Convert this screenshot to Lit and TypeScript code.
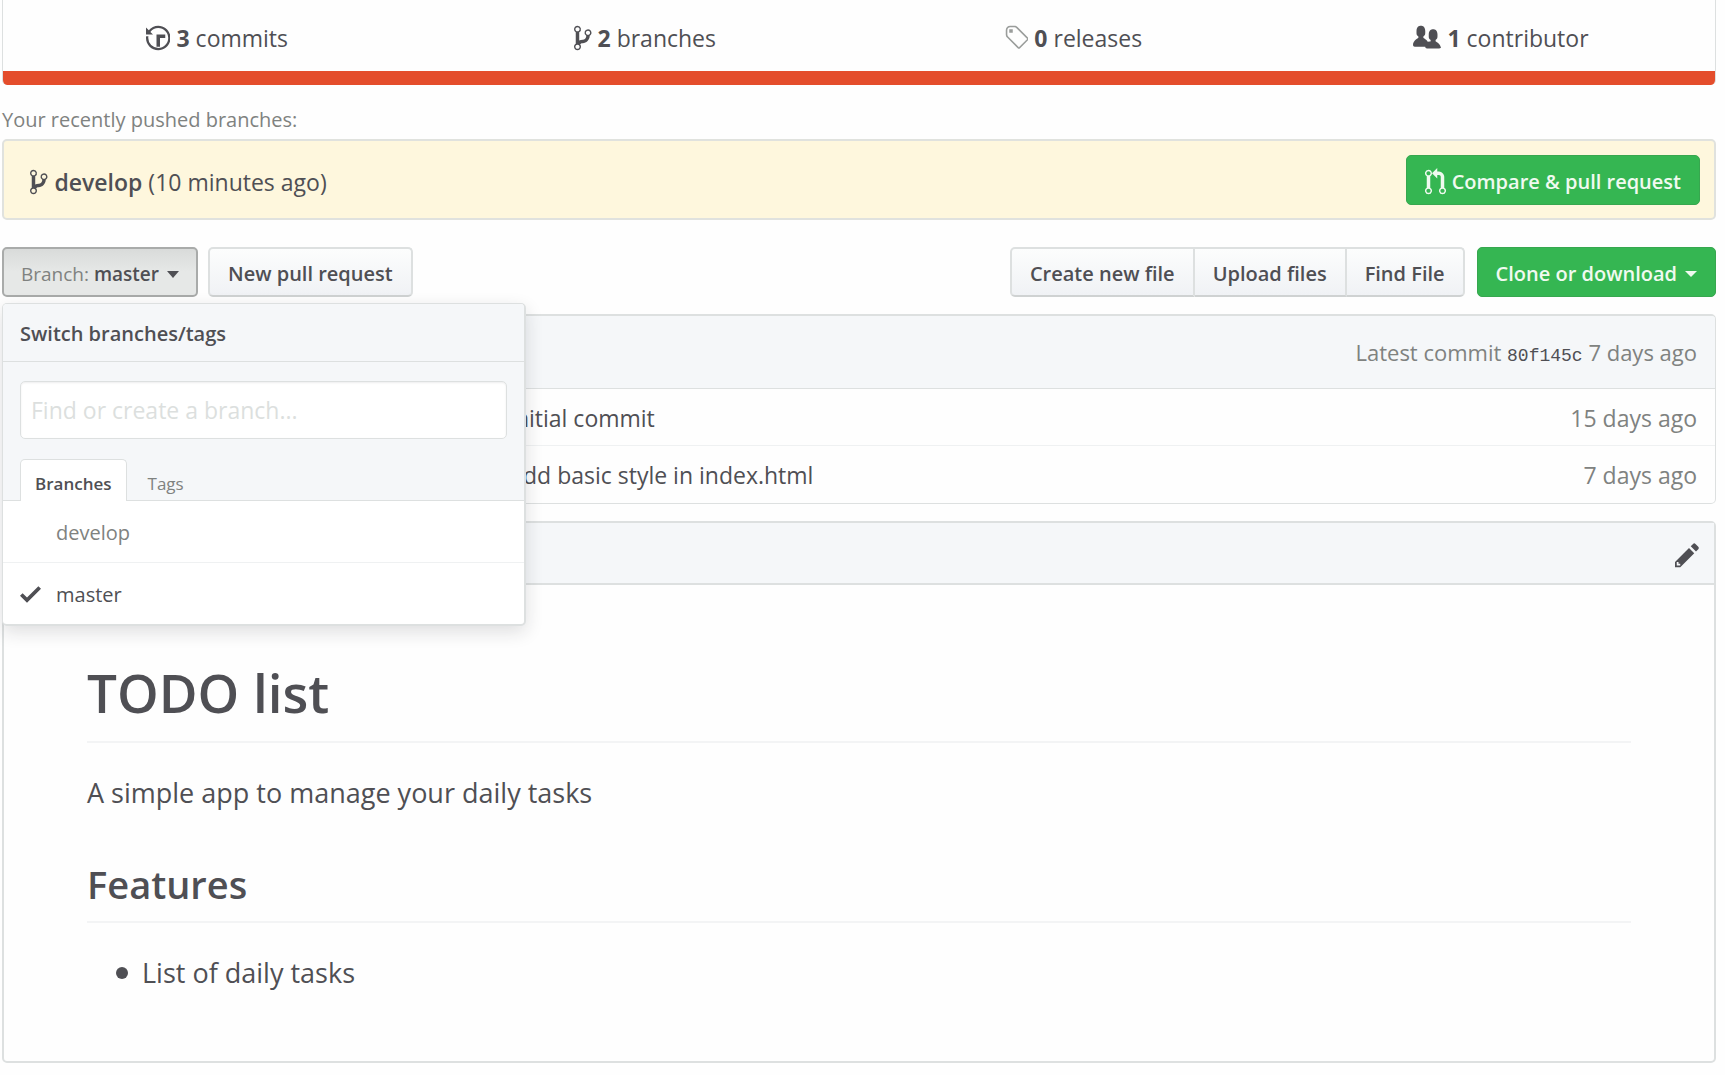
import { LitElement, html, css, svg } from "lit";
import { customElement, property, state } from "lit/decorators.js";
import { classMap } from "lit/directives/class-map.js";

interface IconShape {
  width: number;
  path: string;
}

/* Every icon is drawn on a 16-unit high grid; only the width differs. */
const ICONS: Record<string, IconShape> = {
  history: {
    width: 14,
    path: "M8 13H6V6h5v2H8v5zM7 1C4.81 1 2.87 2.02 1.59 3.59L0 2v4h4L2.5 4.5C3.55 3.17 5.17 2.3 7 2.3c3.14 0 5.7 2.56 5.7 5.7s-2.56 5.7-5.7 5.7A5.71 5.71 0 0 1 1.3 8c0-.34.03-.67.09-1H.08C.03 7.33 0 7.66 0 8c0 3.86 3.14 7 7 7s7-3.14 7-7-3.14-7-7-7z",
  },
  branch: {
    width: 10,
    path: "M10 5c0-1.11-.89-2-2-2a1.993 1.993 0 0 0-1 3.72v.3c-.02.52-.23.98-.63 1.38-.4.4-.86.61-1.38.63-.83.02-1.48.16-2 .45V4.72a1.993 1.993 0 0 0-1-3.72C.88 1 0 1.89 0 3a2 2 0 0 0 1 1.72v6.56c-.59.35-1 .99-1 1.72 0 1.11.89 2 2 2 1.11 0 2-.89 2-2 0-.53-.2-1-.53-1.36.09-.06.48-.41.59-.47.25-.11.56-.17.94-.17 1.05-.05 1.95-.45 2.75-1.25S8.95 7.77 9 6.73h-.02C9.59 6.37 10 5.73 10 5zM2 1.8c.66 0 1.2.55 1.2 1.2 0 .65-.55 1.2-1.2 1.2C1.35 4.2.8 3.65.8 3c0-.65.55-1.2 1.2-1.2zm0 12.41c-.66 0-1.2-.55-1.2-1.2 0-.65.55-1.2 1.2-1.2.65 0 1.2.55 1.2 1.2 0 .65-.55 1.2-1.2 1.2zm6-8c-.66 0-1.2-.55-1.2-1.2 0-.65.55-1.2 1.2-1.2.65 0 1.2.55 1.2 1.2 0 .65-.55 1.2-1.2 1.2z",
  },
  tag: {
    width: 14,
    path: "M7.73 1.73C7.26 1.26 6.62 1 5.96 1H3.5C2.13 1 1 2.13 1 3.5v2.47c0 .66.27 1.3.73 1.77l6.06 6.06c.39.39 1.02.39 1.41 0l4.59-4.59a.996.996 0 0 0 0-1.41L7.73 1.73zM2.38 7.09c-.31-.3-.47-.7-.47-1.13V3.5c0-.88.72-1.59 1.59-1.59h2.47c.42 0 .83.16 1.13.47l6.14 6.13-4.73 4.73-6.13-6.15zM3.01 3h2v2H3V3h.01z",
  },
  people: {
    width: 16,
    path: "M16 12.999c0 .439-.45 1-1 1H7.995c-.539 0-.994-.447-.995-.999H1c-.54 0-1-.561-1-1 0-2.634 3-4 3-4s.229-.409 0-1c-.841-.621-1.058-.59-1-3 .058-2.419 1.367-3 2.5-3s2.442.58 2.5 3c.058 2.41-.159 2.379-1 3-.229.59 0 1 0 1s1.549.711 2.42 2.088A6.78 6.78 0 0 1 10 9.999s.229-.409 0-1c-.841-.62-1.058-.59-1-3 .058-2.419 1.367-3 2.5-3s2.437.581 2.495 3c.059 2.41-.158 2.38-1 3-.229.59 0 1 0 1s3.005 1.366 3.005 4z",
  },
  pull: {
    width: 12,
    path: "M11 11.28V5c-.03-.78-.34-1.47-.94-2.06C9.46 2.35 8.78 2.03 8 2H7V0L4 3l3 3V4h1c.27.02.48.11.69.31.21.2.3.42.31.69v6.28A1.993 1.993 0 0 0 10 15a1.993 1.993 0 0 0 1-3.72zm-1 2.92c-.66 0-1.2-.55-1.2-1.2 0-.65.55-1.2 1.2-1.2.65 0 1.2.55 1.2 1.2 0 .65-.55 1.2-1.2 1.2zM4 3c0-1.11-.89-2-2-2a1.993 1.993 0 0 0-1 3.72v6.56A1.993 1.993 0 0 0 2 15a1.993 1.993 0 0 0 1-3.72V4.72c.59-.34 1-.98 1-1.72zm-.8 10c0 .66-.55 1.2-1.2 1.2-.65 0-1.2-.55-1.2-1.2 0-.65.55-1.2 1.2-1.2.65 0 1.2.55 1.2 1.2zM2 4.2C1.34 4.2.8 3.65.8 3c0-.65.55-1.2 1.2-1.2.65 0 1.2.55 1.2 1.2 0 .65-.55 1.2-1.2 1.2z",
  },
  check: { width: 12, path: "M12 5l-8 8-4-4 1.5-1.5L4 10l6.5-6.5L12 5z" },
  pencil: {
    width: 14,
    path: "M0 12v3h3l8-8-3-3-8 8zm3 2H1v-2h1v1h1v1zm10.3-9.3L12 6 9 3l1.3-1.3a.996.996 0 0 1 1.41 0l1.59 1.59c.39.39.39 1.02 0 1.41z",
  },
};

@customElement("repo-icon")
export class RepoIcon extends LitElement {
  static styles = css`
    :host {
      display: inline-flex;
      flex: none;
    }
    .glyph {
      display: block;
      height: 28px;
      fill: currentColor;
    }
  `;

  @property() name = "branch";

  render() {
    const icon = ICONS[this.name];
    return html`<svg class="glyph" viewBox="0 0 ${icon.width} 16" aria-hidden="true">
      ${svg`<path fill-rule="evenodd" d=${icon.path}></path>`}
    </svg>`;
  }
}

const STATS = [
  { icon: "history", count: 3, label: "commits" },
  { icon: "branch", count: 2, label: "branches" },
  { icon: "tag", count: 0, label: "releases" },
  { icon: "people", count: 1, label: "contributor" },
];

const FILES = [
  { message: "Initial commit", age: "15 days ago" },
  { message: "Add basic style in index.html", age: "7 days ago" },
];

@customElement("app-root")
export class AppRoot extends LitElement {
  static styles = css`
    :host {
      --text: #4f4f54;
      --muted: #7f8280;
      --line: #dde0e0;
      --soft-line: #eff1f2;
      --panel: #f5f7f9;
      --green: #35b652;
      display: block;
      box-sizing: border-box;
      min-height: 100vh;
      padding: 0 9px 13px 2px;
      background: #fefefe;
      color: var(--text);
      font: 400 23px/32px "Open Sans", "Noto Sans", sans-serif;
    }
    *,
    *::before {
      box-sizing: border-box;
    }
    a {
      color: inherit;
      text-decoration: none;
    }
    button,
    input {
      font: inherit;
      color: inherit;
      margin: 0;
    }
    b {
      font-weight: 600;
    }

    .summary {
      border: 1px solid var(--line);
      border-width: 0 1px;
      border-radius: 0 0 5px 5px;
      overflow: hidden;
    }
    .stats {
      display: grid;
      grid-template-columns: repeat(4, 1fr);
      height: 71px;
      margin: 0;
      padding: 4px 0 0;
      list-style: none;
    }
    .stat {
      display: flex;
      align-items: center;
      justify-content: center;
    }
    .stat-link {
      display: flex;
      align-items: center;
      gap: 6px;
    }
    .stat-link b {
      font-weight: 700;
    }
    .stat-link .light {
      color: #9a9d9b;
    }
    .language {
      height: 14px;
      background: #e44d2c;
    }

    .recent {
      margin: 20px 0 4px;
      color: var(--muted);
      font-size: 20px;
      line-height: 30px;
    }
    .flash {
      display: flex;
      align-items: center;
      justify-content: space-between;
      height: 81px;
      padding: 0 14px 0 26px;
      border: 2px solid #e0e2de;
      border-radius: 5px;
      background: #fef7dd;
    }
    .pushed {
      display: flex;
      align-items: center;
      gap: 7px;
      padding-top: 4px;
    }

    .toolbar {
      display: flex;
      align-items: center;
      gap: 10px;
      margin: 27px 0 17px;
    }
    .spacer {
      flex: 1;
    }
    .btn {
      display: inline-flex;
      align-items: center;
      height: 50px;
      padding: 4px 18px 0;
      border: 2px solid var(--line);
      border-bottom-color: #cfd2d2;
      border-radius: 5px;
      background: linear-gradient(#fcfdfd, #f0f2f5);
      font-size: 20px;
      font-weight: 600;
      white-space: nowrap;
      cursor: pointer;
    }
    .btn.primary {
      gap: 6px;
      border-color: #37a74f;
      border-width: 1px;
      padding: 4px 18px 0;
      background: var(--green);
      color: #f0faf0;
    }
    .btn.select {
      gap: 8px;
      padding: 4px 17px 0;
      border-color: #a9abaa;
      background: linear-gradient(#d9dbda, #e6e8e7 50%);
      font-size: 19px;
    }
    .btn.select .prefix {
      color: var(--muted);
      font-weight: 400;
    }
    .caret {
      border: 6px solid transparent;
      border-top: 7px solid currentColor;
      border-bottom: 0;
    }
    .primary .caret {
      margin-left: 2px;
      border-top-width: 6px;
    }
    .group {
      display: flex;
      margin-right: 2px;
    }
    .group .btn {
      border-radius: 0;
    }
    .group .btn + .btn {
      border-left: 0;
    }
    .group .btn:first-child {
      border-radius: 5px 0 0 5px;
    }
    .group .btn:last-child {
      border-radius: 0 5px 5px 0;
    }

    .picker {
      position: relative;
      display: flex;
    }
    .menu {
      position: absolute;
      z-index: 2;
      top: calc(100% + 6px);
      left: 0;
      width: 524px;
      border: 2px solid var(--line);
      border-width: 1px 2px 2px 1px;
      border-radius: 5px;
      background: #fff;
      box-shadow: 0 6px 18px rgba(27, 31, 35, 0.14);
      overflow: hidden;
    }
    .menu-title {
      margin: 0;
      padding: 2px 17px 0;
      border-bottom: 1px solid var(--line);
      background: var(--panel);
      font-size: 20px;
      font-weight: 600;
      line-height: 55px;
    }
    .filters {
      padding: 19px 17px 0;
      background: var(--panel);
      border-bottom: 1px solid var(--line);
    }
    .search {
      display: block;
      width: 100%;
      height: 58px;
      padding: 0 10px;
      border: 1px solid var(--line);
      border-radius: 5px;
      background: #fff;
      outline: 0;
      box-shadow: inset 0 1px 2px rgba(27, 31, 35, 0.08);
    }
    .search::placeholder {
      color: #dcdfde;
      opacity: 1;
    }
    .tabs {
      display: flex;
      gap: 6px;
      margin: 20px 0 -1px;
    }
    .tab {
      height: 42px;
      padding: 6px 14px 0;
      border: 1px solid transparent;
      border-bottom: 0;
      border-radius: 5px 5px 0 0;
      background: none;
      color: var(--muted);
      font-size: 17px;
      line-height: 24px;
      cursor: pointer;
    }
    .tab.selected {
      border-color: var(--line);
      background: #fff;
      color: var(--text);
      font-weight: 600;
    }
    .branches {
      margin: 0;
      padding: 0;
      list-style: none;
    }
    .branch + .branch {
      border-top: 1px solid var(--soft-line);
    }
    .branch-link {
      display: grid;
      grid-template-columns: 21px 1fr;
      align-items: center;
      gap: 15px;
      height: 61px;
      padding: 0 17px;
      color: var(--muted);
      font-size: 20px;
    }
    .branch-link.current {
      color: var(--text);
    }
    .branch-name {
      grid-column: 2;
      padding-top: 2px;
    }

    .files {
      border: 1px solid var(--line);
      border-top-width: 2px;
      border-radius: 5px;
      overflow: hidden;
    }
    .commit {
      height: 72px;
      padding: 20px 18px 0;
      background: var(--panel);
      color: var(--muted);
      font-size: 22px;
      text-align: right;
    }
    .hash {
      color: var(--text);
      font: 18px/32px "Liberation Mono", monospace;
    }
    .listing {
      width: 100%;
      border-collapse: collapse;
      table-layout: fixed;
    }
    .listing td {
      height: 57px;
      padding: 2px 18px 0 9px;
      border-top: 1px solid var(--soft-line);
    }
    .listing tr:first-child td {
      border-top-color: var(--line);
    }
    .listing .name {
      width: 29%;
    }
    .listing .age {
      width: 20%;
      color: var(--muted);
      text-align: right;
    }

    .readme {
      margin-top: 17px;
      border: 2px solid var(--line);
      border-radius: 5px;
    }
    .readme-bar {
      display: flex;
      align-items: center;
      justify-content: flex-end;
      height: 62px;
      padding: 4px 15px 0;
      border-bottom: 2px solid var(--line);
      background: var(--panel);
    }
    .edit {
      display: flex;
      padding: 0;
      border: 0;
      background: none;
      cursor: pointer;
    }
    .article {
      padding: 75px 83px 68px;
      font-size: 27px;
      line-height: 40px;
    }
    .article h1,
    .article h2 {
      margin: 0;
      border-bottom: 2px solid #f3f4f5;
      font-weight: 600;
    }
    .article h1 {
      padding-bottom: 15px;
      font-size: 53px;
      line-height: 66px;
    }
    .article h2 {
      padding-bottom: 14px;
      font-size: 38px;
      line-height: 46px;
    }
    .article p {
      margin: 30px 0 48px;
    }
    .article ul {
      margin: 30px 0 0;
      padding: 0 0 0 29px;
      list-style: none;
    }
    .article li {
      display: flex;
      align-items: center;
      gap: 14px;
    }
    .article li::before {
      content: "";
      width: 12px;
      height: 12px;
      border-radius: 50%;
      background: currentColor;
    }
  `;

  @state() private open = true;
  @state() private tab = "Branches";
  @state() private current = "master";

  private renderMenu() {
    return html`<div class="menu">
      <h2 class="menu-title">Switch branches/tags</h2>
      <div class="filters">
        <input class="search" type="text" placeholder="Find or create a branch..." aria-label="Find or create a branch" />
        <div class="tabs" role="tablist">
          ${["Branches", "Tags"].map(
            (name) => html`<button
              class=${classMap({ tab: true, selected: this.tab === name })}
              type="button"
              role="tab"
              aria-selected=${this.tab === name}
              @click=${() => (this.tab = name)}
            >${name}</button>`
          )}
        </div>
      </div>
      <ul class="branches">
        ${(this.tab === "Branches" ? ["develop", "master"] : []).map(
          (name) => html`<li class="branch">
            <a
              class=${classMap({ "branch-link": true, current: this.current === name })}
              href="#${name}"
              @click=${() => (this.current = name)}
            >
              ${this.current === name ? html`<repo-icon name="check"></repo-icon>` : null}
              <span class="branch-name">${name}</span>
            </a>
          </li>`
        )}
      </ul>
    </div>`;
  }

  render() {
    return html`
      <section class="summary">
        <ul class="stats">
          ${STATS.map(
            (s) => html`<li class="stat">
              <a class="stat-link" href="#${s.label}">
                <repo-icon class=${classMap({ light: s.icon === "tag" })} name=${s.icon}></repo-icon>
                <span><b>${s.count}</b> ${s.label}</span>
              </a>
            </li>`
          )}
        </ul>
        <div class="language"></div>
      </section>

      <p class="recent">Your recently pushed branches:</p>
      <section class="flash">
        <a class="pushed" href="#develop">
          <repo-icon name="branch"></repo-icon>
          <span><b>develop</b> (10 minutes ago)</span>
        </a>
        <button class="btn primary" type="button">
          <repo-icon name="pull"></repo-icon>Compare &amp; pull request
        </button>
      </section>

      <nav class="toolbar">
        <div class="picker">
          <button class="btn select" type="button" aria-expanded=${this.open} @click=${() => (this.open = !this.open)}>
            <span><span class="prefix">Branch:</span> ${this.current}</span><span class="caret"></span>
          </button>
          ${this.open ? this.renderMenu() : null}
        </div>
        <button class="btn" type="button">New pull request</button>
        <span class="spacer"></span>
        <div class="group">
          <button class="btn" type="button">Create new file</button>
          <button class="btn" type="button">Upload files</button>
          <button class="btn" type="button">Find File</button>
        </div>
        <button class="btn primary" type="button">Clone or download<span class="caret"></span></button>
      </nav>

      <section class="files">
        <div class="commit">
          Latest commit <a class="hash" href="#80f145c">80f145c</a> 7 days ago
        </div>
        <table class="listing">
          <tbody>
            ${FILES.map(
              (f) => html`<tr>
                <td class="name"></td>
                <td>${f.message}</td>
                <td class="age">${f.age}</td>
              </tr>`
            )}
          </tbody>
        </table>
      </section>

      <section class="readme">
        <div class="readme-bar">
          <button class="edit" type="button" aria-label="Edit"><repo-icon name="pencil"></repo-icon></button>
        </div>
        <article class="article">
          <h1>TODO list</h1>
          <p>A simple app to manage your daily tasks</p>
          <h2>Features</h2>
          <ul>
            <li>List of daily tasks</li>
          </ul>
        </article>
      </section>
    `;
  }
}
